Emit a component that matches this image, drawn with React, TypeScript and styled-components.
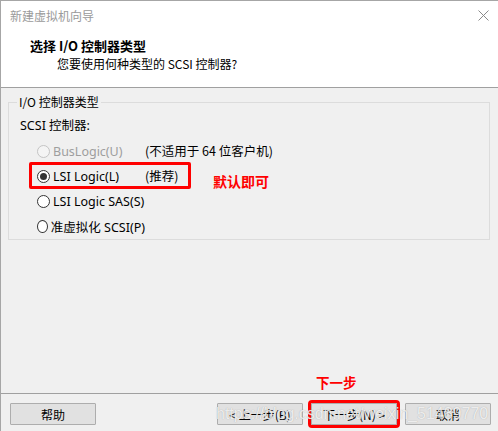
import React from "react";
import styled, { createGlobalStyle } from "styled-components";

const GlobalStyle = createGlobalStyle`
  html, body {
    margin: 0;
    padding: 0;
    background: #f0f0f0;
  }
  body {
    font-family: "Noto Sans", "Noto Sans CJK SC", sans-serif;
    font-size: 12px;
    color: #000;
  }
`;

type RadioProps = { checked?: boolean; disabled?: boolean };

const Radio = ({ checked, disabled }: RadioProps) => (
  <RadioDot $checked={checked} $disabled={disabled} />
);

export default function App() {
  return (
    <>
      <GlobalStyle />
      <Window>
        <Header>
          <TitleBar>
            <WindowTitle>新建虚拟机向导</WindowTitle>
            <CloseButton>
              <svg width="11" height="11" viewBox="0 0 11 11">
                <path d="M0.5 0.5 L10.5 10.5 M10.5 0.5 L0.5 10.5" stroke="#8a8a8a" strokeWidth="1" />
              </svg>
            </CloseButton>
          </TitleBar>
          <PageTitle>选择 I/O 控制器类型</PageTitle>
          <PageSubtitle>您要使用何种类型的 SCSI 控制器?</PageSubtitle>
        </Header>

        <Body>
          <GroupBox>
            <Legend>I/O 控制器类型</Legend>
            <FieldLabel>SCSI 控制器:</FieldLabel>
            <Options>
              <OptionRow>
                <Choice $disabled>
                  <Radio disabled />
                  BusLogic(U)
                </Choice>
                <Note>(不适用于 64 位客户机)</Note>
              </OptionRow>
              <OptionRow>
                <Choice>
                  <Radio checked />
                  LSI Logic(L)
                </Choice>
                <Note>(推荐)</Note>
                <Highlight />
                <Remark>默认即可</Remark>
              </OptionRow>
              <OptionRow>
                <Choice>
                  <Radio />
                  LSI Logic SAS(S)
                </Choice>
              </OptionRow>
              <OptionRow>
                <Choice>
                  <Radio />
                  准虚拟化 SCSI(P)
                </Choice>
              </OptionRow>
            </Options>
          </GroupBox>
        </Body>

        <Footer>
          <NextHint>下一步</NextHint>
          <Button>帮助</Button>
          <Spacer />
          <Button>&lt; 上一步(B)</Button>
          <Button $marked>下一步(N) &gt;</Button>
          <Button>取消</Button>
          <Watermark>https://blog.csdn.net/weixin_51489770</Watermark>
        </Footer>
      </Window>
    </>
  );
}

const Window = styled.div`
  width: 498px;
  height: 431px;
  box-sizing: border-box;
  border-left: 1px solid #a6a6a6;
  border-top: 1px solid #a6a6a6;
  display: flex;
  flex-direction: column;
  background: #f0f0f0;
  overflow: hidden;
`;

const Header = styled.div`
  background: #fff;
  height: 86px;
  border-bottom: 1px solid #a0a0a0;
  display: flex;
  flex-direction: column;
`;

const TitleBar = styled.div`
  height: 29px;
  display: flex;
  align-items: center;
  justify-content: space-between;
  padding: 0 8px 0 9px;
`;

const WindowTitle = styled.span`
  color: #9a9a9a;
  font-size: 12px;
  font-family: "Noto Sans CJK SC", sans-serif;
`;

const CloseButton = styled.span`
  display: flex;
  margin-right: 1px;
`;

const PageTitle = styled.div`
  margin: 7px 0 0 29px;
  font-weight: bold;
  font-size: 13px;
  line-height: 18px;
  font-family: "Noto Sans CJK SC", sans-serif;
`;

const PageSubtitle = styled.div`
  margin: 0 0 0 56px;
  font-size: 12px;
  line-height: 17px;
  font-family: "Noto Sans CJK SC", sans-serif;
`;

const Body = styled.div`
  flex: 1;
  padding: 6px 8px 0 7px;
`;

const GroupBox = styled.fieldset`
  margin: 0;
  padding: 0 0 6px 11px;
  height: 146px;
  box-sizing: border-box;
  border: 1px solid #dcdcdc;
  min-inline-size: 0;
`;

const Legend = styled.legend`
  padding: 0 2px;
  margin-left: -3px;
  font-size: 12px;
  line-height: 16px;
  font-family: "Noto Sans CJK SC", sans-serif;
`;

const FieldLabel = styled.div`
  margin-top: 8px;
  line-height: 16px;
  font-size: 12.5px;
  font-family: "Noto Sans", "Noto Sans CJK SC", sans-serif;
`;

const Options = styled.div`
  margin-top: 5px;
  padding-left: 17px;
  display: flex;
  flex-direction: column;
`;

const OptionRow = styled.div`
  position: relative;
  height: 25px;
  display: grid;
  grid-template-columns: 108px auto;
  align-items: center;
`;

const Choice = styled.label<{ $disabled?: boolean }>`
  display: flex;
  align-items: center;
  gap: 3px;
  font-size: 12.5px;
  color: ${(p) => (p.$disabled ? "#9e9e9e" : "#000")};
  font-family: "Noto Sans", "Noto Sans CJK SC", sans-serif;
  white-space: nowrap;
`;

const RadioDot = styled.span<{ $checked?: boolean; $disabled?: boolean }>`
  width: 13px;
  height: 13px;
  box-sizing: border-box;
  border-radius: 50%;
  border: 1px solid ${(p) => (p.$disabled ? "#c4c4c4" : "#333")};
  background: ${(p) => (p.$disabled ? "#f4f4f4" : "#fff")};
  display: inline-flex;
  align-items: center;
  justify-content: center;
  &::after {
    content: "";
    width: 7px;
    height: 7px;
    border-radius: 50%;
    background: #333;
    display: ${(p) => (p.$checked ? "block" : "none")};
  }
`;

const Note = styled.span`
  font-family: "Noto Sans CJK SC", sans-serif;
  font-size: 12.5px;
  white-space: nowrap;
  margin-top: -3px;
`;

const Highlight = styled.span`
  position: absolute;
  left: -8px;
  top: -2px;
  width: 162px;
  height: 27px;
  box-sizing: border-box;
  border: 3px solid #f00;
  border-radius: 2px;
`;

const Remark = styled.span`
  position: absolute;
  left: 176px;
  top: 7px;
  color: #f00;
  font-weight: bold;
  font-size: 14px;
  font-family: "Noto Sans CJK SC", sans-serif;
`;

const Footer = styled.div`
  position: relative;
  height: 38px;
  box-sizing: border-box;
  border-top: 1px solid #a0a0a0;
  display: flex;
  align-items: flex-start;
  padding: 9px 7px 0 9px;
  gap: 8px;
`;

const Spacer = styled.div`
  flex: 1;
`;

const Button = styled.div<{ $marked?: boolean }>`
  width: 86px;
  height: 22px;
  box-sizing: border-box;
  border: 1px solid #adadad;
  background: #e1e1e1;
  display: flex;
  align-items: center;
  justify-content: center;
  font-family: "Noto Sans CJK SC", sans-serif;
  font-size: 12px;
  outline: ${(p) => (p.$marked ? "3px solid #f00" : "none")};
  outline-offset: 0px;
  border-radius: 1px;
`;

const NextHint = styled.span`
  position: absolute;
  left: 315px;
  top: -22px;
  color: #f00;
  font-weight: bold;
  font-size: 13.5px;
  font-family: "Noto Sans CJK SC", sans-serif;
`;

const Watermark = styled.span`
  position: absolute;
  left: 215px;
  top: 11px;
  font-family: "Liberation Sans", sans-serif;
  font-size: 16px;
  color: rgba(255, 255, 255, 0.8);
  text-shadow: 0 0 1px rgba(120, 120, 120, 0.6);
  pointer-events: none;
  white-space: nowrap;
`;
